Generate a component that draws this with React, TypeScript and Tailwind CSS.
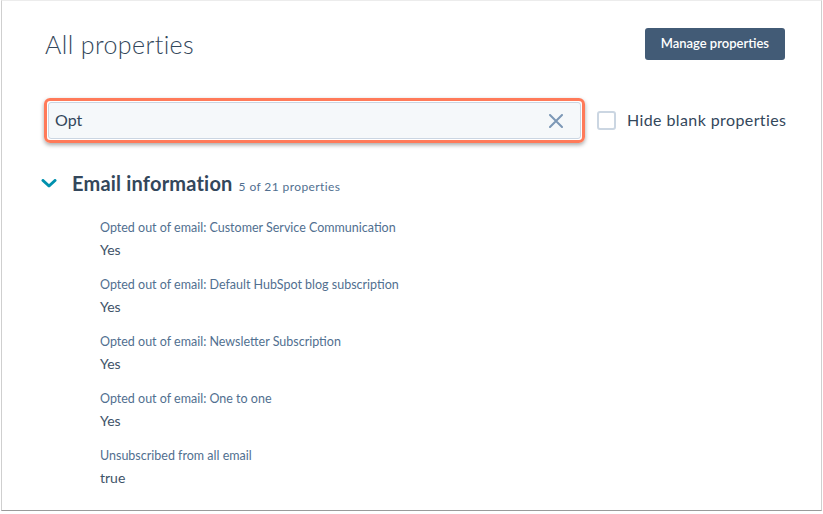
import { useState } from 'react';

const properties = [
    { label: 'Opted out of email: Customer Service Communication', value: 'Yes' },
    { label: 'Opted out of email: Default HubSpot blog subscription', value: 'Yes' },
    { label: 'Opted out of email: Newsletter Subscription', value: 'Yes' },
    { label: 'Opted out of email: One to one', value: 'Yes' },
    { label: 'Unsubscribed from all email', value: 'true' },
];

const App = () => {
    const [query, setQuery] = useState('Opt');
    const [hideBlank, setHideBlank] = useState(false);

    return (
        <div className="w-[823px] h-[514px] bg-white font-['Lato',sans-serif] text-[#33475b]">
            <div className="ml-px w-[821px] h-[511px] border border-[#cfcfcf] border-t-[#ececec] border-b-[#9a9a9a] bg-white flex flex-col">
                {/* Header */}
                <div className="flex items-start justify-between pl-[43px] pr-[36px] pt-[27px]">
                    <h1 className="text-[25px] font-light leading-[32px] tracking-[0.4px]">All properties</h1>
                    <button className="h-[32px] px-[16px] rounded-[3px] bg-[#425b76] text-white text-[13px] font-semibold">
                        Manage properties
                    </button>
                </div>

                {/* Search row */}
                <div className="flex items-center mt-[38px] pl-[42px]">
                    <div className="w-[541px] shrink-0 p-px rounded-[6px] border-[3px] border-[#ff7a59] shadow-[0_2px_4px_rgba(0,0,0,0.35)]">
                        <div className="h-[37px] flex items-center rounded-[3px] border border-[#cbd6e2] bg-[#f5f8fa] pl-[6px] pr-[17px]">
                            <input
                                value={query}
                                onChange={(e) => setQuery(e.target.value)}
                                className="flex-1 bg-transparent outline-none text-[16px] leading-none text-[#33475b] pb-[3px]"
                            />
                            <svg width="14" height="14" viewBox="0 0 14 14" className="shrink-0">
                                <path d="M1 1 L13 13 M13 1 L1 13" stroke="#7c98b6" strokeWidth="2" strokeLinecap="round" />
                            </svg>
                        </div>
                    </div>
                    <label className="flex items-center gap-[11px] ml-[12px] cursor-pointer whitespace-nowrap">
                        <span
                            onClick={() => setHideBlank(!hideBlank)}
                            className="w-[19px] h-[19px] shrink-0 rounded-[3px] border-2 border-[#cbd6e2] bg-white"
                        ></span>
                        <span className="text-[16px] leading-none tracking-[0.4px] pb-[2px]">Hide blank properties</span>
                    </label>
                </div>

                {/* Section */}
                <div className="mt-[26px] pl-[39px]">
                    <div className="flex items-baseline">
                        <svg width="16" height="9" viewBox="0 0 16 9" className="mr-[15px] self-center">
                            <path d="M2 1.5 L8 7 L14 1.5" fill="none" stroke="#0091ae" strokeWidth="3" strokeLinecap="round" strokeLinejoin="round" />
                        </svg>
                        <h2 className="text-[20px] font-bold leading-[28px] tracking-[0.2px]">Email information</h2>
                        <span className="ml-[6px] text-[12px] tracking-[0.4px] text-[#516f90]">5 of 21 properties</span>
                    </div>

                    <ul className="mt-[22px] pl-[59px] flex flex-col gap-[17px]">
                        {properties.map((p) => (
                            <li key={p.label}>
                                <p className="text-[12.5px] leading-[18px] text-[#516f90]">{p.label}</p>
                                <p className="mt-[3px] text-[14px] leading-[19px] text-[#3e5368]">{p.value}</p>
                            </li>
                        ))}
                    </ul>
                </div>
            </div>
        </div>
    );
};

export default App;
